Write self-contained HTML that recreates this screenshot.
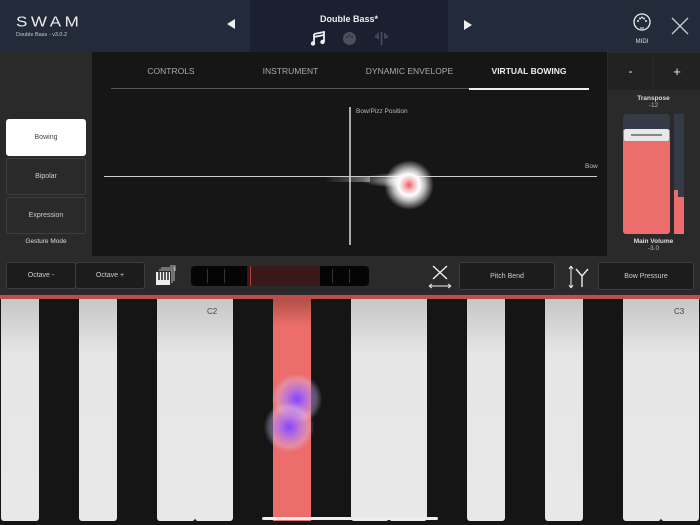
<!DOCTYPE html>
<html><head><meta charset="utf-8"><style>
*{margin:0;padding:0;box-sizing:border-box}
body{width:700px;height:525px;overflow:hidden;background:#141414;font-family:"Liberation Sans",sans-serif;position:relative;color:#ddd}
.a{position:absolute}
.btn{position:absolute;border:1px solid #3e3e3e;border-radius:3px;background:#1c1c1c;color:#ccc;font-size:7px;display:flex;align-items:center;justify-content:center}
.tab{position:absolute;top:66px;font-size:8.5px;color:#aaa;text-align:center}
.w{position:absolute;top:299px;height:222px;width:38px;border-radius:0 0 3px 3px;background:linear-gradient(#c6c6c6,#e6e6e6 25%,#e8e8e8)}
.lbl{position:absolute;font-size:6.5px;color:#ddd;text-align:center;width:93px;left:607px}
</style></head><body>
<div class="a" style="left:0;top:0;width:700px;height:52px;background:#232a3a"></div>
<div class="a" style="left:250px;top:0;width:198px;height:52px;background:#1a2030"></div>
<div class="a" style="left:16px;top:12px;font-size:17px;letter-spacing:3.5px;color:#eee;transform:scaleY(0.85)">SWAM</div>
<div class="a" style="left:16px;top:32px;font-size:5.5px;color:#ccc">Double Bass - v3.0.2</div>
<div class="a" style="left:227px;top:19px;width:0;height:0;border-top:5px solid transparent;border-bottom:5px solid transparent;border-right:8px solid #eee"></div>
<div class="a" style="left:464px;top:20px;width:0;height:0;border-top:5px solid transparent;border-bottom:5px solid transparent;border-left:8px solid #eee"></div>
<div class="a" style="left:250px;top:14px;width:198px;text-align:center;font-size:9px;font-weight:bold;color:#eee">Double Bass*</div>
<svg class="a" style="left:310px;top:31px" width="16" height="15" viewBox="0 0 16 15"><path d="M4 3 L14 1 L14 11 M4 3 L4 13 M4 6 L14 4" stroke="#eee" stroke-width="1.8" fill="none"/><circle cx="3" cy="12.5" r="2.2" fill="#eee"/><circle cx="12.5" cy="11" r="2.2" fill="#eee"/></svg>
<svg class="a" style="left:342px;top:31px" width="15" height="15"><circle cx="7.5" cy="7.5" r="6.5" fill="#4a505c"/><circle cx="5" cy="6" r="1" fill="#2a2f3a"/><circle cx="10" cy="6" r="1" fill="#2a2f3a"/><circle cx="7.5" cy="4" r="1" fill="#2a2f3a"/></svg>
<svg class="a" style="left:375px;top:30px" width="13" height="17"><path d="M6.5 2 V15 M3 3 V9 M10 3 V9 M1 5 V8 M12 5 V8" stroke="#4a505c" stroke-width="1.5" fill="none"/></svg>
<svg class="a" style="left:632px;top:12px" width="20" height="20"><circle cx="10" cy="10" r="8" stroke="#eee" stroke-width="1.3" fill="none"/><circle cx="6" cy="9" r="1" fill="#eee"/><circle cx="14" cy="9" r="1" fill="#eee"/><circle cx="8" cy="6.5" r="1" fill="#eee"/><circle cx="12" cy="6.5" r="1" fill="#eee"/><circle cx="10" cy="5.5" r="1" fill="#eee"/><path d="M8 16 h4" stroke="#eee"/></svg>
<div class="a" style="left:631px;top:39px;font-size:6px;color:#ddd;width:22px;text-align:center">MIDI</div>
<svg class="a" style="left:671px;top:17px" width="18" height="18"><path d="M1 1 L17 17 M17 1 L1 17" stroke="#ccc" stroke-width="1.3"/></svg>
<div class="a" style="left:0;top:52px;width:92px;height:204px;background:#2a2a2a"></div>
<div class="a" style="left:92px;top:52px;width:515px;height:204px;background:#161616"></div>
<div class="a" style="left:607px;top:52px;width:93px;height:204px;background:#2a2a2a"></div>
<div class="tab" style="left:111px;width:120px">CONTROLS</div>
<div class="tab" style="left:231px;width:119px">INSTRUMENT</div>
<div class="tab" style="left:350px;width:119px">DYNAMIC ENVELOPE</div>
<div class="tab" style="left:469px;width:120px;color:#eee;font-weight:bold">VIRTUAL BOWING</div>
<div class="a" style="left:111px;top:88px;width:478px;height:1px;background:#555"></div>
<div class="a" style="left:469px;top:88px;width:120px;height:2px;background:#eee"></div>
<div class="btn" style="left:6px;top:119px;width:80px;height:37px;background:#fff;color:#444;border-color:#fff">Bowing</div>
<div class="btn" style="left:6px;top:158px;width:80px;height:37px;background:#2a2a2a">Bipolar</div>
<div class="btn" style="left:6px;top:197px;width:80px;height:37px;background:#2a2a2a">Expression</div>
<div class="a" style="left:6px;top:238px;width:80px;text-align:center;font-size:6.5px;color:#ddd">Gesture Mode</div>
<div class="a" style="left:349px;top:107px;width:1.5px;height:138px;background:#aaa"></div>
<div class="a" style="left:104px;top:176px;width:493px;height:1px;background:#ccc"></div>
<div class="a" style="left:356px;top:108px;font-size:6.5px;color:#bbb">Bow/Pizz Position</div>
<div class="a" style="left:585px;top:163px;font-size:6.5px;color:#bbb">Bow</div>
<div class="a" style="left:325px;top:177px;width:45px;height:5px;background:linear-gradient(90deg,rgba(255,255,255,0),rgba(255,255,255,.4))"></div>
<div class="a" style="left:360px;top:172px;width:60px;height:15px;border-radius:50%;background:radial-gradient(ellipse at 80% 55%,rgba(255,255,255,.95),rgba(255,255,255,0) 70%)"></div>
<div class="a" style="left:384px;top:160px;width:50px;height:50px;border-radius:50%;background:radial-gradient(circle,#f05858 0,#f5b8b8 14%,#fff 30%,rgba(255,255,255,.7) 45%,rgba(255,255,255,0) 70%)"></div>
<div class="a" style="left:608px;top:53px;width:45px;height:37px;background:#222;color:#eee;font-size:12px;text-align:center;line-height:37px">-</div>
<div class="a" style="left:654px;top:53px;width:46px;height:37px;background:#222;color:#eee;font-size:13px;text-align:center;line-height:37px">+</div>
<div class="lbl" style="top:95px;font-weight:bold">Transpose</div>
<div class="lbl" style="top:102px;color:#bbb">-12</div>
<div class="a" style="left:623px;top:114px;width:47px;height:120px;border-radius:3px;background:#343a46;overflow:hidden"><div class="a" style="left:0;top:16px;width:47px;height:104px;background:#ec6d6b"></div></div>
<div class="a" style="left:624px;top:129px;width:45px;height:12px;border-radius:2px;background:#e8e8e8"><div class="a" style="left:7px;top:5px;width:31px;height:1.5px;background:#888"></div></div>
<div class="a" style="left:674px;top:114px;width:10px;height:120px;background:#343a46"></div>
<div class="a" style="left:674px;top:190px;width:4px;height:44px;background:#ec6d6b"></div>
<div class="a" style="left:678px;top:197px;width:6px;height:37px;background:#ec6d6b"></div>
<div class="lbl" style="top:238px;font-weight:bold">Main Volume</div>
<div class="lbl" style="top:245px;color:#bbb">-3.0</div>
<div class="a" style="left:0;top:256px;width:700px;height:39px;background:#2a2a2a"></div>
<div class="btn" style="left:6px;top:262px;width:70px;height:27px">Octave -</div>
<div class="btn" style="left:75px;top:262px;width:70px;height:27px">Octave +</div>
<svg class="a" style="left:155px;top:265px" width="22" height="22"><path d="M4 5 H17 V18 M6 3 H19 V16 M15 1 h5 v5" stroke="#bbb" stroke-width="1" fill="none"/><rect x="1" y="7" width="14" height="13" fill="#eee"/><path d="M4 7 v8 M7 7 v8 M10 7 v8 M13 7 v8" stroke="#222" stroke-width="1.5"/></svg>
<div class="a" style="left:191px;top:266px;width:178px;height:20px;border-radius:4px;background:#050505;overflow:hidden">
<div class="a" style="left:56px;top:0;width:73px;height:20px;background:#3a1818"></div>
<div class="a" style="left:59px;top:-4px;width:1px;height:28px;background:#b04040"></div>
<div class="a" style="left:16px;top:3px;width:1px;height:14px;background:#333"></div><div class="a" style="left:33px;top:3px;width:1px;height:14px;background:#333"></div><div class="a" style="left:141px;top:3px;width:1px;height:14px;background:#333"></div><div class="a" style="left:158px;top:3px;width:1px;height:14px;background:#333"></div>
</div>
<svg class="a" style="left:427px;top:264px" width="26" height="26"><path d="M6 2 L20 15 M20 2 L6 15" stroke="#eee" stroke-width="1.4"/><path d="M2 22 H24 M2 22 l3 -2 M2 22 l3 2 M24 22 l-3 -2 M24 22 l-3 2" stroke="#eee" stroke-width="1"/></svg>
<div class="btn" style="left:459px;top:262px;width:96px;height:28px">Pitch Bend</div>
<svg class="a" style="left:566px;top:264px" width="26" height="26"><path d="M5 2 V24 M5 2 l-2 3 M5 2 l2 3 M5 24 l-2 -3 M5 24 l2 -3" stroke="#eee" stroke-width="1"/><path d="M10 5 L16 12 L22 5 M16 12 V23" stroke="#eee" stroke-width="1.4" fill="none"/></svg>
<div class="btn" style="left:598px;top:262px;width:96px;height:28px">Bow Pressure</div>
<div class="a" style="left:0;top:295px;width:700px;height:4px;background:#c04e48"></div>
<div class="a" style="left:0;top:299px;width:700px;height:226px;background:#151515"></div>
<div class="w" style="left:1px"></div>
<div class="w" style="left:79px"></div>
<div class="w" style="left:157px"></div>
<div class="w" style="left:195px"></div>
<div class="w" style="left:351px"></div>
<div class="w" style="left:389px"></div>
<div class="w" style="left:467px"></div>
<div class="w" style="left:545px"></div>
<div class="w" style="left:623px"></div>
<div class="w" style="left:661px"></div>
<div class="a" style="left:207px;top:307px;font-size:8px;color:#444">C2</div>
<div class="a" style="left:674px;top:307px;font-size:8px;color:#444">C3</div>
<div class="a" style="left:273px;top:299px;width:38px;height:222px;background:linear-gradient(#b05048,#ec6d6b 12%,#ec6d6b)"></div>
<div class="a" style="left:272px;top:374px;width:50px;height:50px;border-radius:50%;background:radial-gradient(circle,#8844ff 0,rgba(170,120,255,.7) 30%,rgba(220,200,255,.35) 55%,rgba(255,255,255,0) 72%)"></div>
<div class="a" style="left:264px;top:402px;width:50px;height:50px;border-radius:50%;background:radial-gradient(circle,#8844ff 0,rgba(170,120,255,.7) 30%,rgba(220,200,255,.35) 55%,rgba(255,255,255,0) 72%)"></div>
<div class="a" style="left:262px;top:517px;width:176px;height:3px;border-radius:2px;background:#eee"></div>
</body></html>
